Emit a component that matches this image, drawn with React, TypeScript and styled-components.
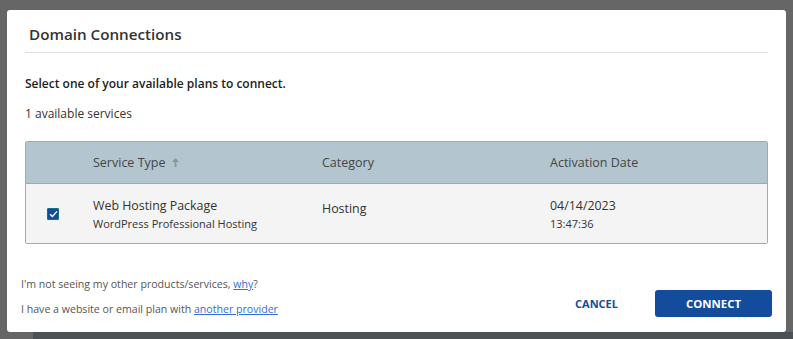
import React from "react";
import styled, { createGlobalStyle } from "styled-components";

const Global = createGlobalStyle`
  html, body { margin: 0; padding: 0; }
  body {
    width: 793px;
    height: 339px;
    overflow: hidden;
    background:
      linear-gradient(to bottom, transparent 332px, #4b5155 332px) 33px 0 / 760px 339px no-repeat,
      #666666;
    font-family: "Open Sans", "Noto Sans", sans-serif;
    color: #333;
  }
`;

const Backdrop = styled.div`
  padding: 10px 7px 0 7px;
`;

const Modal = styled.div`
  width: 779px;
  height: 322px;
  background: #fff;
  border-radius: 3px;
  display: flex;
  flex-direction: column;
  box-sizing: border-box;
`;

const Header = styled.div`
  margin: 0 18px;
  padding: 13px 4px 6px;
  border-bottom: 1px solid #dedede;
`;

const Title = styled.h2`
  margin: 0;
  font-size: 15.2px;
  line-height: 23px;
  font-weight: 600;
  color: #333;
`;

const Body = styled.div`
  padding: 0 18px;
`;

const Lead = styled.p`
  margin: 22px 0 0;
  font-size: 12px;
  line-height: 18px;
  font-weight: 600;
  color: #222;
`;

const Count = styled.p`
  margin: 12px 0 0;
  font-size: 12px;
  line-height: 18px;
  color: #333;
`;

const Table = styled.div`
  margin-top: 18px;
  border: 1px solid #a8a8a8;
  border-radius: 2px;
`;

const Row = styled.div<{ $head?: boolean }>`
  display: grid;
  grid-template-columns: 55px 229px 228px 1fr;
  align-items: center;
  height: ${(p) => (p.$head ? "41px" : "59px")};
  background: ${(p) => (p.$head ? "#b3c6d0" : "#f4f4f4")};
  border-bottom: ${(p) => (p.$head ? "1px solid #a8a8a8" : "none")};
`;

const HeadCell = styled.div`
  padding-left: 12px;
  font-size: 12.5px;
  color: #454545;
  display: flex;
  align-items: center;
  gap: 7px;
`;

const Cell = styled.div<{ $lift?: number }>`
  padding-left: 12px;
  display: flex;
  flex-direction: column;
  margin-top: 2px;
  margin-bottom: ${(p) => p.$lift ?? 0}px;
`;

const CheckCell = styled.div`
  display: flex;
  padding-left: 21px;
`;

const Checkbox = styled.span`
  width: 12px;
  height: 12px;
  background: #134c9c;
  border: 1px solid #1b6a8a;
  box-sizing: border-box;
  border-radius: 1px;
  display: flex;
  align-items: center;
  justify-content: center;
`;

const Primary = styled.span`
  font-size: 12.4px;
  line-height: 18px;
  color: #333;
`;

const Secondary = styled.span`
  font-size: 11px;
  line-height: 18px;
  color: #333;
`;

const Footer = styled.div`
  margin-top: 31px;
  padding: 0 14px;
  display: flex;
  justify-content: space-between;
  align-items: flex-start;
`;

const Notes = styled.div`
  display: flex;
  flex-direction: column;
  gap: 7px;
`;

const Note = styled.p`
  margin: 0;
  font-size: 10.6px;
  line-height: 18px;
  color: #555;
`;

const Link = styled.a`
  color: #2f6fd8;
  text-decoration: underline;
`;

const Actions = styled.div`
  display: flex;
  align-items: center;
  gap: 37px;
  margin-top: 15px;
`;

const TextButton = styled.button`
  border: 0;
  background: none;
  padding: 0;
  font-family: inherit;
  font-size: 11px;
  font-weight: 700;
  color: #134c9c;
`;

const PrimaryButton = styled.button`
  width: 117px;
  height: 27px;
  border: 0;
  border-radius: 3px;
  background: #134c9c;
  color: #fff;
  font-family: inherit;
  font-size: 11.4px;
  font-weight: 700;
`;

const SortArrow = () => (
  <svg width="7" height="9" viewBox="0 0 7 9">
    <path d="M3.5 0 L7 4 H4.5 V9 H2.5 V4 H0 Z" fill="#8f969a" />
  </svg>
);

const Check = () => (
  <svg width="9" height="8" viewBox="0 0 9 8">
    <path d="M1 4.2 L3.4 6.4 L8 1.4" stroke="#fff" strokeWidth="1.4" fill="none" />
  </svg>
);

export default function App() {
  return (
    <>
      <Global />
      <Backdrop>
        <Modal>
          <Header>
            <Title>Domain Connections</Title>
          </Header>
          <Body>
            <Lead>Select one of your available plans to connect.</Lead>
            <Count>1 available services</Count>
            <Table>
              <Row $head>
                <HeadCell />
                <HeadCell>
                  Service Type <SortArrow />
                </HeadCell>
                <HeadCell>Category</HeadCell>
                <HeadCell>Activation Date</HeadCell>
              </Row>
              <Row>
                <CheckCell>
                  <Checkbox>
                    <Check />
                  </Checkbox>
                </CheckCell>
                <Cell>
                  <Primary>Web Hosting Package</Primary>
                  <Secondary>WordPress Professional Hosting</Secondary>
                </Cell>
                <Cell $lift={12}>
                  <Primary>Hosting</Primary>
                </Cell>
                <Cell>
                  <Primary>04/14/2023</Primary>
                  <Secondary>13:47:36</Secondary>
                </Cell>
              </Row>
            </Table>
          </Body>
          <Footer>
            <Notes>
              <Note>
                I'm not seeing my other products/services, <Link href="#">why</Link>?
              </Note>
              <Note>
                I have a website or email plan with <Link href="#">another provider</Link>
              </Note>
            </Notes>
            <Actions>
              <TextButton>CANCEL</TextButton>
              <PrimaryButton>CONNECT</PrimaryButton>
            </Actions>
          </Footer>
        </Modal>
      </Backdrop>
    </>
  );
}
